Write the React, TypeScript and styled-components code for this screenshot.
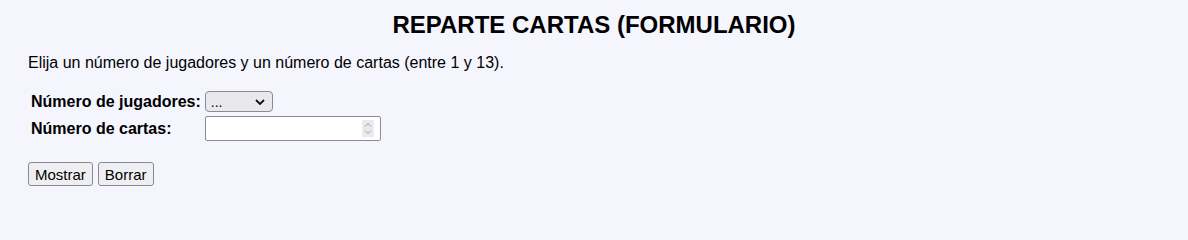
import React from 'react';
import styled, { createGlobalStyle } from 'styled-components';

const GlobalStyle = createGlobalStyle`
  html, body {
    background-color: #f5f5fe;
  }
  body {
    margin: 8px;
    font-family: "Liberation Sans", Arial, sans-serif;
    color: #000;
  }
`;

export default function App() {
  return (
    <>
      <GlobalStyle />
      <Page>
        <Title>REPARTE CARTAS (FORMULARIO)</Title>
        <Intro>Elija un número de jugadores y un número de cartas (entre 1 y 13).</Intro>
        <form onSubmit={e => e.preventDefault()}>
          <FieldTable>
            <tbody>
              <tr>
                <LabelCell>
                  <label htmlFor="jugadores">Número de jugadores:</label>
                </LabelCell>
                <td>
                  <Control>
                    <Select id="jugadores" defaultValue="">
                      <option value="">...</option>
                      <option value="2">2</option>
                      <option value="3">3</option>
                      <option value="4">4</option>
                    </Select>
                    <Chevron viewBox="0 0 10 6" aria-hidden="true">
                      <path d="M1 1 L5 5 L9 1" />
                    </Chevron>
                  </Control>
                </td>
              </tr>
              <tr>
                <LabelCell>
                  <label htmlFor="cartas">Número de cartas:</label>
                </LabelCell>
                <td>
                  <Control>
                    <NumberInput id="cartas" type="number" min={1} max={13} />
                    <Spinner viewBox="0 0 12 17" aria-hidden="true">
                      <path d="M3 6.5 L6 3.5 L9 6.5" />
                      <path d="M3 10.5 L6 13.5 L9 10.5" />
                    </Spinner>
                  </Control>
                </td>
              </tr>
            </tbody>
          </FieldTable>
          <Actions>
            <Button type="submit">Mostrar</Button>
            <Button type="reset">Borrar</Button>
          </Actions>
        </form>
      </Page>
    </>
  );
}

const Page = styled.div`
  padding: 0 20px;
`;

const Title = styled.h1`
  margin: 3px 0 0;
  text-align: center;
  font-size: 24px;
  line-height: 27px;
  font-weight: bold;
`;

const Intro = styled.p`
  margin: 16px 0 16px;
  font-size: 16px;
`;

const FieldTable = styled.table`
  border-spacing: 2px;
  border-collapse: separate;
  font-size: 16px;

  td {
    padding: 1px;
  }
`;

const LabelCell = styled.td`
  font-weight: bold;
  padding-right: 1px !important;
`;

const Control = styled.span`
  position: relative;
  display: inline-block;
  vertical-align: middle;
`;

const Select = styled.select`
  appearance: none;
  display: block;
  box-sizing: border-box;
  width: 68px;
  height: 21px;
  margin: 0;
  padding: 0 0 0 5px;
  border: 1px solid #8a8a96;
  border-radius: 4px;
  background: #e9e9ed;
  color: #000;
  font-family: "Liberation Sans", Arial, sans-serif;
  font-size: 14px;
`;

const Chevron = styled.svg`
  position: absolute;
  right: 8px;
  top: 8px;
  width: 10px;
  height: 6px;
  pointer-events: none;
  fill: none;
  stroke: #111;
  stroke-width: 1.8;
`;

const NumberInput = styled.input`
  display: block;
  box-sizing: border-box;
  width: 176px;
  height: 25px;
  margin: 0;
  padding: 1px 24px 1px 3px;
  border: 1px solid #8a8a96;
  border-radius: 2px;
  background: #fff;
  font-family: "Liberation Sans", Arial, sans-serif;
  font-size: 13.33px;
  appearance: textfield;

  &::-webkit-inner-spin-button,
  &::-webkit-outer-spin-button {
    -webkit-appearance: none;
    margin: 0;
  }
`;

const Spinner = styled.svg`
  position: absolute;
  right: 7px;
  top: 4px;
  width: 12px;
  height: 17px;
  background: #eaeaee;
  pointer-events: none;
  fill: none;
  stroke: #9a9aa4;
  stroke-width: 1;
`;

const Actions = styled.p`
  margin: 18px 0 16px;
  display: flex;
  gap: 5px;
`;

const Button = styled.button`
  box-sizing: border-box;
  height: 24px;
  margin: 0;
  padding: 0 6px;
  border: 1px solid #8a8a96;
  border-radius: 3px;
  background: #efeff2;
  color: #000;
  font-family: "Liberation Sans", Arial, sans-serif;
  font-size: 15px;
`;
